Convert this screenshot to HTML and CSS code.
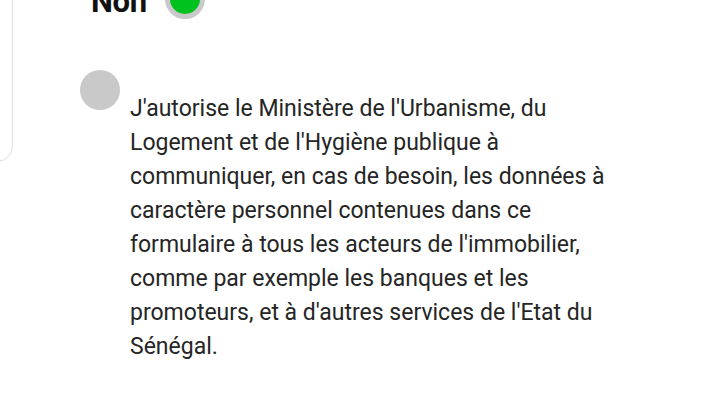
FILE: index.html
```html
<!DOCTYPE html>
<html lang="fr">
<head>
<meta charset="utf-8">
<title>Consentement</title>
<link rel="stylesheet" href="styles.css">
</head>
<body>
<div class="page">
  <div class="side-card"></div>
  <div class="main">
    <div class="choice-row">
      <span class="choice-label">Non</span>
      <span class="radio radio-on"></span>
    </div>
    <div class="consent-row">
      <span class="radio-off"></span>
      <p class="consent-text">J'autorise le Ministère de l'Urbanisme, du Logement et de l'Hygiène publique à communiquer, en cas de besoin, les données à caractère personnel contenues dans ce formulaire à tous les acteurs de l'immobilier, comme par exemple les banques et les promoteurs, et à d'autres services de l'Etat du Sénégal.</p>
    </div>
  </div>
</div>
</body>
</html>
```

FILE: styles.css
```css
html, body {
  margin: 0;
  padding: 0;
  background: #ffffff;
  overflow: hidden;
}

body {
  width: 720px;
  height: 394px;
  font-family: Roboto, "Liberation Sans", Arial, sans-serif;
}

.page {
  display: flex;
  align-items: flex-start;
}

.side-card {
  flex: none;
  box-sizing: border-box;
  width: 114px;
  height: 302px;
  margin-left: -101px;
  margin-top: -140px;
  border: 1px solid #e0e0e0;
  border-radius: 16px;
  background: #fff;
}

.main {
  flex: 1;
  margin-top: -21px;
}

.choice-row {
  display: flex;
  align-items: center;
  height: 40px;
  margin-left: 78px;
}

.choice-label {
  font-size: 31px;
  font-weight: 700;
  color: #111;
  margin-top: 5px;
  margin-right: 18px;
  letter-spacing: -0.3px;
}

.radio {
  box-sizing: border-box;
  width: 40px;
  height: 40px;
  border-radius: 50%;
}

.radio-on {
  background: #00c21e;
  border: 5px solid #c9c9c9;
}

.consent-row {
  display: flex;
  align-items: flex-start;
  margin-top: 51px;
  margin-left: 67px;
}

.radio-off {
  flex: none;
  width: 40px;
  height: 40px;
  border-radius: 50%;
  background: #c9c9c9;
}

.consent-text {
  margin: 22px 0 0 10px;
  width: 490px;
  font-size: 23px;
  line-height: 34px;
  color: #252525;
}
```
